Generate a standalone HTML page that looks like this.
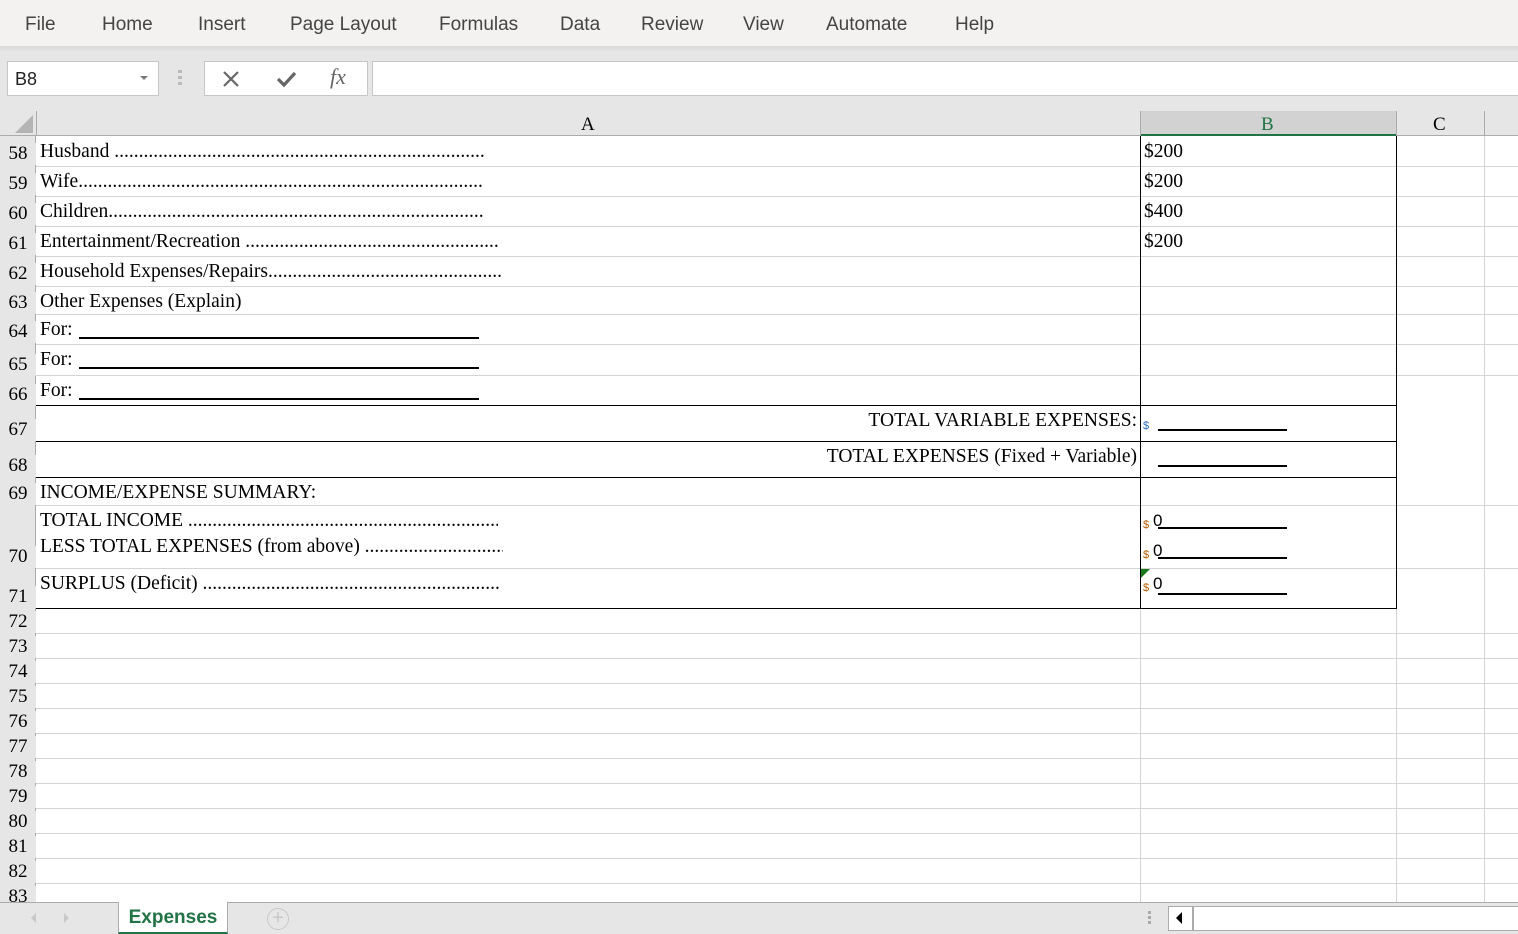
<!DOCTYPE html>
<html><head><meta charset="utf-8"><style>
*{margin:0;padding:0;box-sizing:border-box}
body{width:1518px;height:934px;overflow:hidden;background:#fff;position:relative;font-family:"Liberation Serif",serif;color:#000}
.a{position:absolute}
.menu{left:0;top:0;width:1518px;height:46px;background:#f3f2f1;font-family:"Liberation Sans",sans-serif;font-size:19px;color:#444}
.menu span{position:absolute;top:14px}
.gl{position:absolute;left:36px;width:1482px;height:1px;background:#d4d4d4}
.vl{position:absolute;width:1px;background:#d4d4d4}
.rn{position:absolute;left:0;width:36px;text-align:center;font-size:19px;background:#e6e6e6}
.t{position:absolute;font-size:19.5px;white-space:nowrap;overflow:hidden;line-height:22px;padding-top:2px}
.ul{position:absolute;height:2px;background:#000}
.bk{position:absolute;background:#000}
.dol{position:absolute;font-family:"Liberation Sans",sans-serif;font-size:11px;color:#b35a00}
.z{position:absolute;font-family:"Liberation Sans",sans-serif;font-size:17px}
</style></head><body>
<div class="a menu">
<span style="left:25px">File</span><span style="left:102px">Home</span><span style="left:198px">Insert</span><span style="left:290px">Page Layout</span><span style="left:439px">Formulas</span><span style="left:560px">Data</span><span style="left:641px">Review</span><span style="left:743px">View</span><span style="left:826px">Automate</span><span style="left:955px">Help</span>
</div>
<div class="a" style="left:0;top:46px;width:1518px;height:65px;background:#e6e6e6"></div>
<div class="a" style="left:0;top:46px;width:1518px;height:6px;background:linear-gradient(#d8d8d8,#e6e6e6)"></div>
<div class="a" style="left:7px;top:61px;width:152px;height:35px;background:#fff;border:1px solid #c6c6c6;font-family:'Liberation Sans',sans-serif;font-size:18px;padding:7px 0 0 7px;color:#222">B8<span style="position:absolute;right:10px;top:14px;border:4px solid transparent;border-top:4px solid #777"></span></div>
<div class="a" style="left:178px;top:70px;width:4px;height:16px;background:repeating-linear-gradient(#bbb 0 3px,transparent 3px 6px)"></div>
<div class="a" style="left:204px;top:61px;width:164px;height:35px;background:#fff;border:1px solid #c6c6c6"></div>
<svg class="a" style="left:222px;top:70px" width="18" height="18"><path d="M2 2L16 16M16 2L2 16" stroke="#666" stroke-width="2.2"/></svg>
<svg class="a" style="left:276px;top:70px" width="22" height="18"><path d="M2 9L8 15L19 3" stroke="#666" stroke-width="3.2" fill="none"/></svg>
<div class="a" style="left:330px;top:64px;font-family:'Liberation Serif',serif;font-style:italic;font-size:22px;color:#666">fx</div>
<div class="a" style="left:372px;top:61px;width:1146px;height:35px;background:#fff;border:1px solid #c6c6c6;border-right:none"></div>
<div class="a" style="left:0;top:111px;width:1518px;height:25px;background:#e6e6e6;border-bottom:1px solid #ababab"></div>
<svg class="a" style="left:15px;top:115px" width="19" height="19"><path d="M18 0V18H0Z" fill="#b4b4b4"/></svg>
<div class="a" style="left:1140px;top:111px;width:256px;height:25px;background:#d2d2d2;border-bottom:2px solid #217346"></div>
<div class="a" style="left:36px;top:111px;width:1px;height:25px;background:#ababab"></div>
<div class="a" style="left:1140px;top:111px;width:1px;height:25px;background:#ababab"></div>
<div class="a" style="left:1396px;top:111px;width:1px;height:25px;background:#ababab"></div>
<div class="a" style="left:1484px;top:111px;width:1px;height:25px;background:#ababab"></div>
<div class="a" style="left:581px;top:114px;font-size:19px">A</div>
<div class="a" style="left:1261px;top:114px;font-size:19px;color:#217346">B</div>
<div class="a" style="left:1433px;top:114px;font-size:19px">C</div>
<div class="a" style="left:0;top:136px;width:36px;height:766px;background:#e6e6e6;border-right:1px solid #ababab"></div>
<div class="gl" style="top:166px"></div><div class="gl" style="top:196px"></div><div class="gl" style="top:226px"></div><div class="gl" style="top:256px"></div><div class="gl" style="top:286px"></div><div class="gl" style="top:314px"></div><div class="gl" style="top:344px"></div><div class="gl" style="top:375px"></div><div class="gl" style="top:505px"></div><div class="gl" style="top:568px"></div><div class="gl" style="top:633px"></div><div class="gl" style="top:658px"></div><div class="gl" style="top:683px"></div><div class="gl" style="top:708px"></div><div class="gl" style="top:733px"></div><div class="gl" style="top:758px"></div><div class="gl" style="top:783px"></div><div class="gl" style="top:808px"></div><div class="gl" style="top:833px"></div><div class="gl" style="top:858px"></div><div class="gl" style="top:883px"></div>
<div class="vl" style="left:1140px;top:608px;height:294px"></div>
<div class="vl" style="left:1396px;top:136px;height:766px"></div>
<div class="vl" style="left:1484px;top:136px;height:766px"></div>
<div class="rn" style="top:143px">58</div><div class="rn" style="top:173px">59</div><div class="rn" style="top:203px">60</div><div class="rn" style="top:233px">61</div><div class="rn" style="top:263px">62</div><div class="rn" style="top:292px">63</div><div class="rn" style="top:321px">64</div><div class="rn" style="top:354px">65</div><div class="rn" style="top:384px">66</div><div class="rn" style="top:419px">67</div><div class="rn" style="top:455px">68</div><div class="rn" style="top:483px">69</div><div class="rn" style="top:546px">70</div><div class="rn" style="top:586px">71</div><div class="rn" style="top:611px">72</div><div class="rn" style="top:636px">73</div><div class="rn" style="top:661px">74</div><div class="rn" style="top:686px">75</div><div class="rn" style="top:711px">76</div><div class="rn" style="top:736px">77</div><div class="rn" style="top:761px">78</div><div class="rn" style="top:786px">79</div><div class="rn" style="top:811px">80</div><div class="rn" style="top:836px">81</div><div class="rn" style="top:861px">82</div><div class="rn" style="top:886px">83</div>
<div class="t" style="left:40px;top:139px;width:444px">Husband ......................................................................................................................</div>
<div class="t" style="left:40px;top:169px;width:444px">Wife.................................................................................................................................</div>
<div class="t" style="left:40px;top:199px;width:444px">Children..............................................................................................................................</div>
<div class="t" style="left:40px;top:229px;width:459px">Entertainment/Recreation .............................................................................................</div>
<div class="t" style="left:40px;top:259px;width:461px">Household Expenses/Repairs.........................................................................................</div>
<div class="t" style="left:40px;top:289px">Other Expenses (Explain)</div>
<div class="t" style="left:40px;top:317px">For:</div><div class="ul" style="left:79px;top:337px;width:400px;height:1.5px"></div>
<div class="t" style="left:40px;top:347px">For:</div><div class="ul" style="left:79px;top:367px;width:400px;height:1.5px"></div>
<div class="t" style="left:40px;top:378px">For:</div><div class="ul" style="left:79px;top:398px;width:400px;height:1.5px"></div>
<div class="t" style="left:600px;top:408px;width:537px;text-align:right">TOTAL VARIABLE EXPENSES:</div>
<div class="t" style="left:600px;top:444px;width:537px;text-align:right">TOTAL EXPENSES (Fixed + Variable)</div>
<div class="t" style="left:40px;top:480px">INCOME/EXPENSE SUMMARY:</div>
<div class="t" style="left:40px;top:508px;width:458px">TOTAL INCOME ..............................................................................................</div>
<div class="t" style="left:40px;top:534px;width:463px">LESS TOTAL EXPENSES (from above) ...........................................................</div>
<div class="t" style="left:40px;top:571px;width:461px">SURPLUS (Deficit) ............................................................................................</div>
<div class="t" style="left:1144px;top:139px">$200</div>
<div class="t" style="left:1144px;top:169px">$200</div>
<div class="t" style="left:1144px;top:199px">$400</div>
<div class="t" style="left:1144px;top:229px">$200</div>
<div class="dol" style="left:1143px;top:420px;color:#2a6ebb">$</div>
<div class="ul" style="left:1158px;top:429px;width:129px"></div>
<div class="ul" style="left:1158px;top:465px;width:129px"></div>
<div class="dol" style="left:1143px;top:519px">$</div><div class="z" style="left:1153px;top:511px">0</div><div class="ul" style="left:1158px;top:527px;width:129px"></div>
<div class="dol" style="left:1143px;top:549px">$</div><div class="z" style="left:1153px;top:541px">0</div><div class="ul" style="left:1158px;top:557px;width:129px"></div>
<div class="dol" style="left:1143px;top:582px">$</div><div class="z" style="left:1153px;top:574px">0</div><div class="ul" style="left:1158px;top:593px;width:129px"></div>
<svg class="a" style="left:1141px;top:569px" width="10" height="10"><path d="M0 0H9L0 9Z" fill="#1a7a1a"/></svg>
<div class="bk" style="left:1140px;top:136px;width:1px;height:472px"></div>
<div class="bk" style="left:1396px;top:136px;width:1px;height:472px"></div>
<div class="bk" style="left:36px;top:405px;width:1361px;height:1px"></div>
<div class="bk" style="left:36px;top:441px;width:1361px;height:1px"></div>
<div class="bk" style="left:36px;top:477px;width:1361px;height:1px"></div>
<div class="bk" style="left:36px;top:608px;width:1361px;height:1px"></div>
<div class="a" style="left:0;top:902px;width:1518px;height:32px;background:#e6e6e6;border-top:1px solid #ababab"></div>
<svg class="a" style="left:28px;top:911px" width="50" height="14"><path d="M8 2L3 7L8 12Z" fill="#c8c8c8"/><path d="M36 2L41 7L36 12Z" fill="#c8c8c8"/></svg>
<div class="a" style="left:118px;top:902px;width:110px;height:32px;background:#fff;border:1px solid #ababab;border-top:none;border-bottom:2px solid #217346;font-family:'Liberation Sans',sans-serif;font-weight:bold;font-size:19px;color:#217346;text-align:center;padding-top:5px">Expenses</div>
<div class="a" style="left:267px;top:908px;width:22px;height:22px;border:1.5px solid #c8c8c8;border-radius:50%;color:#c8c8c8;text-align:center;line-height:18px;font-family:'Liberation Sans',sans-serif;font-size:20px">+</div>
<div class="a" style="left:1148px;top:911px;width:3px;height:14px;background:repeating-linear-gradient(#aaa 0 3px,transparent 3px 5px)"></div>
<div class="a" style="left:1168px;top:906px;width:350px;height:25px;background:#fff;border:1px solid #ababab;border-right:none"></div>
<div class="a" style="left:1192px;top:906px;width:2px;height:25px;background:#ababab"></div>
<svg class="a" style="left:1175px;top:912px" width="10" height="12"><path d="M7 0V12L1 6Z" fill="#000"/></svg>
</body></html>
